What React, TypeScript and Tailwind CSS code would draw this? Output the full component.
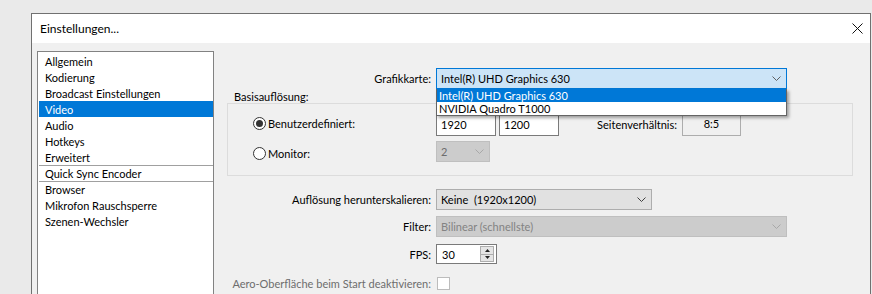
import React from "react";

function Chevron({ color }: { color: string }) {
  return (
    <svg width="9" height="5" viewBox="0 0 9 5" fill="none">
      <path d="M0.5 0.5 L4.5 4.5 L8.5 0.5" stroke={color} strokeWidth="1" />
    </svg>
  );
}

function Radio({ checked }: { checked?: boolean }) {
  return (
    <div className="w-[13px] h-[13px] rounded-full border border-[#333333] bg-white flex items-center justify-center shrink-0">
      {checked && <div className="w-[7px] h-[7px] rounded-full bg-[#333333]" />}
    </div>
  );
}

const items: { label: string; sel?: boolean; sep?: boolean }[] = [
  { label: "Allgemein" },
  { label: "Kodierung" },
  { label: "Broadcast Einstellungen" },
  { label: "Video", sel: true },
  { label: "Audio" },
  { label: "Hotkeys" },
  { label: "Erweitert" },
  { label: "Quick Sync Encoder", sep: true },
  { label: "Browser", sep: true },
  { label: "Mikrofon Rauschsperre" },
  { label: "Szenen-Wechsler" },
];

export default function App() {
  return (
    <div className="w-[872px] h-[294px] overflow-hidden bg-[#eaeaea] pl-[31px] pt-[13px] font-['Lato',sans-serif] text-[11px] text-black leading-none">
      <div className="w-[840px] h-[300px] border border-[#707070] bg-[#f0f0f0] flex flex-col">
        {/* title bar */}
        <div className="h-[29px] bg-white flex items-center justify-between pl-[8px] pr-[7px] shrink-0">
          <span className="text-[12px]">Einstellungen...</span>
          <svg width="11" height="11" viewBox="0 0 11 11" fill="none">
            <path d="M0.5 0.5 L10.5 10.5 M10.5 0.5 L0.5 10.5" stroke="#111111" strokeWidth="1" />
          </svg>
        </div>

        <div className="flex flex-1">
          {/* left list */}
          <div className="ml-[5px] mt-[8px] w-[177px] h-[260px] border border-[#828282] bg-white pt-[1px] pl-[1px] shrink-0">
            {items.map((it) => (
              <div
                key={it.label}
                className={
                  "h-[16px] pl-[6px] flex items-center whitespace-nowrap " +
                  (it.sel ? "bg-[#0078d7] text-white " : "") +
                  (it.sep ? "border-t border-[#a0a0a0] " : "")
                }
              >
                {it.label}
              </div>
            ))}
          </div>

          {/* right panel */}
          <div className="relative flex-1 flex flex-col">
            {/* Grafikkarte */}
            <div className="flex items-center mt-[25px] h-[21px]">
              <div className="w-[217px] text-right">Grafikkarte:</div>
              <div className="ml-[5px] w-[351px] h-[21px] border border-[#0078d7] bg-[#cce4f7] flex items-center justify-between pl-[4px] pr-[5px]">
                <span>Intel(R) UHD Graphics 630</span>
                <Chevron color="#606060" />
              </div>
            </div>

            {/* group box */}
            <div className="relative ml-[13px] mt-[14px] w-[626px] h-[73px] border border-[#dcdcdc] pt-[9px] pl-[25px]">
              <div className="absolute left-[6px] top-[-15px] h-[14px] flex items-center">Basisauflösung:</div>
              <div className="flex items-center h-[23px]">
                <div className="w-[183px] flex items-center gap-[2px] -mt-[3px]">
                  <Radio checked />
                  <span>Benutzerdefiniert:</span>
                </div>
                <div className="w-[60px] h-[23px] border border-[#7a7a7a] bg-white flex items-center pl-[4px]">1920</div>
                <div className="ml-[3px] w-[60px] h-[23px] border border-[#7a7a7a] bg-white flex items-center pl-[4px]">1200</div>
                <div className="w-[118px] text-right">Seitenverhältnis:</div>
                <div className="ml-[5px] w-[59px] h-[26px] -mt-[3px] border border-[#adadad] bg-[#f0f0f0] flex items-center justify-center">8:5</div>
              </div>
              <div className="flex items-center h-[21px] mt-[5px]">
                <div className="w-[183px] flex items-center gap-[2px] mt-[4px]">
                  <Radio />
                  <span>Monitor:</span>
                </div>
                <div className="w-[54px] h-[21px] border border-[#bfbfbf] bg-[#cccccc] flex items-center justify-between pl-[4px] pr-[5px] text-[#6d6d6d]">
                  <span>2</span>
                  <Chevron color="#a8a8a8" />
                </div>
              </div>
            </div>

            {/* Auflösung herunterskalieren */}
            <div className="flex items-center mt-[13px] h-[21px]">
              <div className="w-[217px] text-right">Auflösung herunterskalieren:</div>
              <div className="ml-[5px] w-[216px] h-[21px] border border-[#adadad] bg-[#e1e1e1] flex items-center justify-between pl-[4px] pr-[5px]">
                <span className="whitespace-pre">Keine  (1920x1200)</span>
                <Chevron color="#404040" />
              </div>
            </div>

            {/* Filter */}
            <div className="flex items-center mt-[6px] h-[21px]">
              <div className="w-[217px] text-right">Filter:</div>
              <div className="ml-[5px] w-[351px] h-[21px] border border-[#bfbfbf] bg-[#cccccc] flex items-center justify-between pl-[4px] pr-[5px] text-[#838383]">
                <span>Bilinear (schnellste)</span>
                <Chevron color="#a8a8a8" />
              </div>
            </div>

            {/* FPS */}
            <div className="flex items-center mt-[7px] h-[20px]">
              <div className="w-[217px] text-right">FPS:</div>
              <div className="ml-[5px] w-[61px] h-[20px] border border-[#7a7a7a] bg-white flex items-center justify-between pl-[5px] pr-[2px]">
                <span>30</span>
                <div className="flex flex-col w-[14px] h-[16px]">
                  <div className="flex-1 border border-[#adadad] bg-[#e5e5e5] flex items-center justify-center">
                    <svg width="5" height="3" viewBox="0 0 5 3"><path d="M0 3 L2.5 0 L5 3 Z" fill="#222222" /></svg>
                  </div>
                  <div className="flex-1 border border-t-0 border-[#adadad] bg-[#e5e5e5] flex items-center justify-center">
                    <svg width="5" height="3" viewBox="0 0 5 3"><path d="M0 0 L2.5 3 L5 0 Z" fill="#222222" /></svg>
                  </div>
                </div>
              </div>
            </div>

            {/* Aero */}
            <div className="flex items-center mt-[13px] h-[13px]">
              <div className="w-[217px] text-right text-[#6d6d6d] whitespace-nowrap">Aero-Oberfläche beim Start deaktivieren:</div>
              <div className="ml-[6px] w-[13px] h-[13px] border border-[#bcbcbc] bg-white" />
            </div>

            {/* dropdown list overlay */}
            <div className="absolute left-[222px] top-[46px] w-[351px] border border-t-0 border-[#646464] bg-white shadow-[2px_2px_3px_rgba(0,0,0,0.35)]">
              <div className="h-[13px] bg-[#0078d7] text-white flex items-center pl-[2px]">Intel(R) UHD Graphics 630</div>
              <div className="h-[13px] flex items-center pl-[2px]">NVIDIA Quadro T1000</div>
            </div>
          </div>
        </div>
      </div>
    </div>
  );
}
